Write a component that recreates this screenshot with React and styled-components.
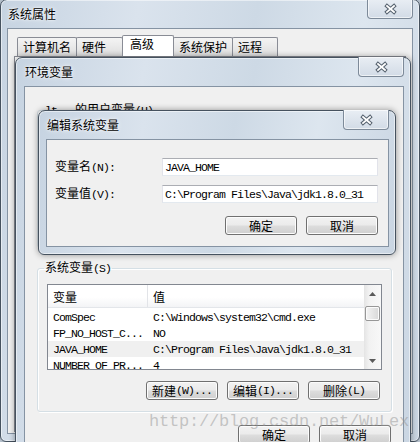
import React from 'react';
import styled, { createGlobalStyle } from 'styled-components';

const GlobalStyle = createGlobalStyle`
  html, body {
    margin: 0;
    padding: 0;
    background: #c9d5e2;
  }
  body {
    font-family: "Noto Sans CJK SC", sans-serif;
    font-size: 12px;
    color: #000;
  }
`;

const Desktop = styled.div`
  position: relative;
  width: 420px;
  height: 442px;
  overflow: hidden;
  background: #c9d5e2;
`;

// each dialog is a window placed on the desktop
const Window = styled.div`
  position: absolute;
  left: ${(p) => p.$x}px;
  top: ${(p) => p.$y}px;
  width: ${(p) => p.$w}px;
  height: ${(p) => p.$h}px;
  box-sizing: border-box;
  display: flex;
  flex-direction: column;
  padding: 0 6px 7px ${(p) => p.$l}px;
  border: 1px solid #46525f;
  border-radius: 7px 7px 6px 6px;
  background: linear-gradient(100deg, #c6d3e1 0%, #dae3ed 28%, #cdd9e5 52%, #dde6ef 74%, #c9d5e2 100%);
  box-shadow: inset 0 0 0 1px rgba(255, 255, 255, 0.5), 0 0 6px rgba(0, 0, 0, 0.4);
`;

const TitleBar = styled.div`
  display: flex;
  height: 28px;
  flex-shrink: 0;
`;

const Caption = styled.span`
  align-self: center;
  padding-left: 1px;
  font-size: 12px;
  line-height: 16px;
  text-shadow: 0 0 5px #fff, 0 0 2px #fff;
`;

const CloseButton = styled.div`
  margin: -1px 0 0 auto;
  width: 46px;
  height: 20px;
  box-sizing: border-box;
  display: flex;
  align-items: center;
  justify-content: center;
  border: 1px solid #7d8a99;
  border-top: none;
  border-radius: 0 0 4px 4px;
  background: linear-gradient(#e9eef4, #d2dbe6);
  box-shadow: inset 0 0 0 1px rgba(255, 255, 255, 0.6);
`;

const Client = styled.div`
  flex: 1;
  min-height: 0;
  display: flex;
  flex-direction: column;
  border: 1px solid #8593a3;
  background: #f0f0f0;
`;

const SysClient = styled(Client)`
  padding: 0 6px 1px 6px;
`;

const EnvClient = styled(Client)`
  padding: 15px 11px 0 12px;
`;

const EditClient = styled(Client)`
  padding: 18px 0 0 8px;
`;

const TabRow = styled.div`
  display: flex;
  align-items: flex-end;
  height: 27px;
  padding-left: 3px;
  flex-shrink: 0;
`;

const Tab = styled.div`
  position: relative;
  z-index: ${(p) => (p.$active ? 1 : 0)};
  width: ${(p) => p.$w}px;
  height: ${(p) => (p.$active ? 21 : 19)}px;
  box-sizing: border-box;
  margin-left: -1px;
  padding: ${(p) => (p.$active ? '0 0 0 7px' : '1px 0 0 5px')};
  border: 1px solid #898c95;
  border-bottom: none;
  border-radius: 2px 2px 0 0;
  background: ${(p) => (p.$active ? '#fff' : 'linear-gradient(#f4f4f4, #e9e9e9 50%, #dcdcdc)')};
  font-size: 12px;
  line-height: 16px;
  white-space: nowrap;
  &:first-child {
    margin-left: 0;
  }
`;

const TabPanel = styled.div`
  flex: 1;
  border: 1px solid #898c95;
  background: #fff;
`;

const Group = styled.fieldset`
  margin: 0;
  min-width: 0;
  box-sizing: border-box;
  height: ${(p) => (p.$h ? `${p.$h}px` : 'auto')};
  border: 1px solid #d5dfe5;
  border-radius: 3px;
  box-shadow: inset 1px 1px 0 #fff, 1px 1px 0 #fff;
  padding: 8px 9px 11px 9px;
  flex-shrink: 0;
`;

const UserGroup = styled(Group)`
  margin-bottom: 12px;
`;

const Legend = styled.legend`
  margin-left: -3px;
  padding: 0 1px;
  font-size: 12px;
  line-height: 14px;
  white-space: pre;
`;

const Mono = styled.span`
  font-family: "Liberation Mono", monospace;
  font-size: 11.5px;
  letter-spacing: -0.9px;
`;

const ListView = styled.div`
  height: 86px;
  box-sizing: border-box;
  display: flex;
  border: 1px solid #828790;
  background: #fff;
`;

const ListMain = styled.div`
  flex: 1;
  min-width: 0;
  display: flex;
  flex-direction: column;
  overflow: hidden;
`;

const Header = styled.div`
  display: grid;
  grid-template-columns: 99px 1fr;
  height: 22px;
  flex-shrink: 0;
  border-bottom: 1px solid #e3e6ea;
  background: linear-gradient(#ffffff 0%, #ffffff 55%, #f3f4f6 100%);
`;

const HeaderCell = styled.div`
  display: flex;
  align-items: center;
  padding-left: 5px;
  font-size: 12px;
  border-left: ${(p) => (p.$divider ? '1px solid #e2e4e8' : 'none')};
`;

const Rows = styled.div`
  padding-top: 1px;
`;

const Row = styled.div`
  display: grid;
  grid-template-columns: 100px 1fr;
  height: 16px;
  align-items: center;
  background: ${(p) => (p.$selected ? '#f0f0f0' : 'transparent')};
  font-family: "Liberation Mono", monospace;
  font-size: 11.5px;
  letter-spacing: -0.9px;
  white-space: nowrap;
`;

const Cell = styled.span`
  padding-left: 5px;
  overflow: hidden;
`;

const ScrollBar = styled.div`
  width: 17px;
  display: flex;
  flex-direction: column;
  background: linear-gradient(90deg, #e4e4e4, #f2f2f2 30%, #f8f8f8);
`;

const ScrollArrow = styled.div`
  height: 17px;
  display: flex;
  align-items: center;
  justify-content: center;
`;

const ScrollTrack = styled.div`
  flex: 1;
  padding: 4px 1px 0 1px;
`;

const Thumb = styled.div`
  height: 15px;
  box-sizing: border-box;
  border: 1px solid #979797;
  border-radius: 2px;
  background: linear-gradient(90deg, #f4f4f4, #e6e6e6 50%, #d8d8d8);
  box-shadow: inset 0 0 0 1px #fbfbfb;
`;

const ButtonRow = styled.div`
  display: flex;
  justify-content: flex-end;
  gap: 9px;
  margin: ${(p) => p.$m};
`;

const Button = styled.div`
  width: 72px;
  height: 19px;
  box-sizing: border-box;
  display: flex;
  align-items: center;
  justify-content: center;
  border: 1px solid #707070;
  border-radius: 3px;
  background: linear-gradient(#f2f2f2 0%, #ebebeb 48%, #dddddd 52%, #cfcfcf 100%);
  box-shadow: inset 0 0 0 1px #fcfcfc;
  font-size: 12px;
  line-height: 16px;
  white-space: nowrap;
`;

const Form = styled.div`
  width: 323px;
  display: flex;
  flex-direction: column;
`;

const Fields = styled.div`
  display: grid;
  grid-template-columns: 107px 216px;
  row-gap: 9px;
  align-items: center;
`;

const FieldLabel = styled.span`
  font-size: 12px;
  line-height: 16px;
`;

const TextBox = styled.div`
  height: 18px;
  box-sizing: border-box;
  display: flex;
  align-items: center;
  padding-left: 2px;
  border: 1px solid #e2e3ea;
  border-top-color: #abadb3;
  border-bottom-color: #e3e9ef;
  background: #fff;
  font-family: "Liberation Mono", monospace;
  font-size: 11.5px;
  letter-spacing: -0.9px;
  white-space: pre;
`;

const Watermark = styled.div`
  position: absolute;
  left: 149px;
  top: 412px;
  font-family: "Liberation Mono", monospace;
  font-size: 17px;
  line-height: 20px;
  letter-spacing: -0.2px;
  color: rgba(150, 150, 150, 0.5);
  pointer-events: none;
  white-space: nowrap;
`;

const CloseIcon = () => (
  <svg width="15" height="12" viewBox="0 0 15 12">
    <path d="M4 3 L11 9 M11 3 L4 9" stroke="#56626f" strokeWidth="3.8" strokeLinecap="square" fill="none" />
    <path d="M4 3 L11 9 M11 3 L4 9" stroke="#fff" strokeWidth="1.8" strokeLinecap="square" fill="none" />
  </svg>
);

const Arrow = ({ up }) => (
  <svg width="7" height="4" viewBox="0 0 7 4">
    <path d={up ? 'M0 4 L3.5 0 L7 4 Z' : 'M0 0 L7 0 L3.5 4 Z'} fill="#5a5a5a" />
  </svg>
);

const tabs = [
  { label: '计算机名', w: 60 },
  { label: '硬件', w: 47 },
  { label: '高级', w: 52, active: true },
  { label: '系统保护', w: 60 },
  { label: '远程', w: 46 },
];

const sysVars = [
  ['ComSpec', 'C:\\Windows\\system32\\cmd.exe'],
  ['FP_NO_HOST_C...', 'NO'],
  ['JAVA_HOME', 'C:\\Program Files\\Java\\jdk1.8.0_31', true],
  ['NUMBER_OF_PR...', '4'],
];

const App = () => {
  return (
    <Desktop>
      <GlobalStyle />

      <Window $x={0} $y={-1} $w={420} $h={443} $l={6}>
        <TitleBar>
          <Caption>系统属性</Caption>
          <CloseButton>
            <CloseIcon />
          </CloseButton>
        </TitleBar>
        <SysClient>
          <TabRow>
            {tabs.map((t) => (
              <Tab key={t.label} $w={t.w} $active={t.active}>
                {t.label}
              </Tab>
            ))}
          </TabRow>
          <TabPanel />
        </SysClient>
      </Window>

      <Window $x={15} $y={57} $w={396} $h={400} $l={8}>
        <TitleBar>
          <Caption>环境变量</Caption>
          <CloseButton>
            <CloseIcon />
          </CloseButton>
        </TitleBar>
        <EnvClient>
          <UserGroup $h={146}>
            <Legend>
              <Mono>lt   </Mono>的用户变量<Mono>(U)</Mono>
            </Legend>
          </UserGroup>
          <Group>
            <Legend>
              系统变量<Mono>(S)</Mono>
            </Legend>
            <ListView>
              <ListMain>
                <Header>
                  <HeaderCell>变量</HeaderCell>
                  <HeaderCell $divider>值</HeaderCell>
                </Header>
                <Rows>
                  {sysVars.map(([name, value, selected]) => (
                    <Row key={name} $selected={selected}>
                      <Cell>{name}</Cell>
                      <Cell>{value}</Cell>
                    </Row>
                  ))}
                </Rows>
              </ListMain>
              <ScrollBar>
                <ScrollArrow>
                  <Arrow up />
                </ScrollArrow>
                <ScrollTrack>
                  <Thumb />
                </ScrollTrack>
                <ScrollArrow>
                  <Arrow />
                </ScrollArrow>
              </ScrollBar>
            </ListView>
            <ButtonRow $m="11px 2px 0 0">
              <Button>
                新建<Mono>(W)...</Mono>
              </Button>
              <Button>
                编辑<Mono>(I)...</Mono>
              </Button>
              <Button>
                删除<Mono>(L)</Mono>
              </Button>
            </ButtonRow>
          </Group>
          <ButtonRow $m="13px 1px 0 0">
            <Button>确定</Button>
            <Button>取消</Button>
          </ButtonRow>
        </EnvClient>
      </Window>

      <Window $x={38} $y={110} $w={358} $h={145} $l={7}>
        <TitleBar>
          <Caption>编辑系统变量</Caption>
          <CloseButton>
            <CloseIcon />
          </CloseButton>
        </TitleBar>
        <EditClient>
          <Form>
            <Fields>
              <FieldLabel>
                变量名<Mono>(N):</Mono>
              </FieldLabel>
              <TextBox>JAVA_HOME</TextBox>
              <FieldLabel>
                变量值<Mono>(V):</Mono>
              </FieldLabel>
              <TextBox>C:\Program Files\Java\jdk1.8.0_31</TextBox>
            </Fields>
            <ButtonRow $m="13px 0 0 0">
              <Button>确定</Button>
              <Button>取消</Button>
            </ButtonRow>
          </Form>
        </EditClient>
      </Window>

      <Watermark>http://blog.csdn.net/WuLex</Watermark>
    </Desktop>
  );
};

export default App;
